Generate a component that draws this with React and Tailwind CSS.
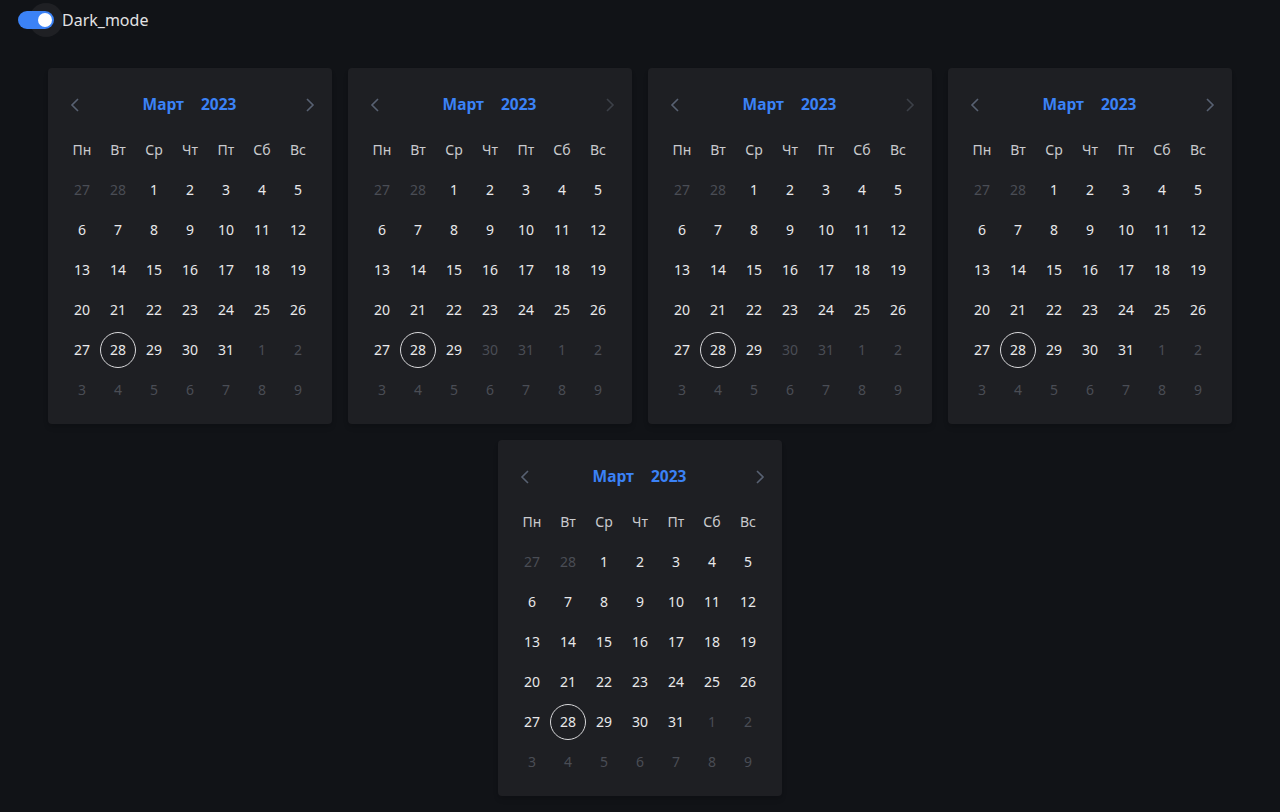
import React from "react";

const weekDays = ["Пн", "Вт", "Ср", "Чт", "Пт", "Сб", "Вс"];

// build March 2023 grid; maxDay = last selectable day of the month
function buildDays(maxDay) {
  const days = [];
  days.push({ n: 27, off: true }, { n: 28, off: true });
  for (let i = 1; i <= 31; i++) days.push({ n: i, off: i > maxDay, today: i === 28 });
  for (let i = 1; i <= 9; i++) days.push({ n: i, off: true });
  return days;
}

function Chevron({ dir, dim }) {
  return (
    <svg
      width="10"
      height="14"
      viewBox="0 0 10 14"
      fill="none"
      stroke={dim ? "#3c4048" : "#586172"}
      strokeWidth="1.6"
    >
      {dir === "left" ? <path d="M8 1 L2 7 L8 13" /> : <path d="M2 1 L8 7 L2 13" />}
    </svg>
  );
}

function Calendar({ maxDay = 31, nextDim = false }) {
  const days = buildDays(maxDay);
  return (
    <div className="w-[284px] rounded bg-[#1e1f23] px-4 pt-4 pb-[14px] shadow-md">
      <div className="mt-[1px] flex h-10 items-center justify-between pl-[6px] pr-[1px]">
        <Chevron dir="left" />
        <div className="mr-[6px] flex gap-[17px] text-[15.5px] font-bold text-[#3b82f6]">
          <span>Март</span>
          <span>2023</span>
        </div>
        <Chevron dir="right" dim={nextDim} />
      </div>
      <div className="mt-[5px] grid grid-cols-7">
        {weekDays.map((d) => (
          <div key={d} className="flex h-10 items-center justify-center text-sm text-[#c9cacd]">
            {d}
          </div>
        ))}
        {days.map((d, i) => (
          <div key={i} className="flex h-10 items-center justify-center">
            <span
              className={
                "flex h-9 w-9 items-center justify-center rounded-full text-sm " +
                (d.off ? "text-[#4a4d55] " : "text-[#e8e8ea] ") +
                (d.today ? "border border-[#d8d8da]" : "")
              }
            >
              {d.n}
            </span>
          </div>
        ))}
      </div>
    </div>
  );
}

export default function App() {
  return (
    <div
      className="min-h-[812px] bg-[#111317]"
      style={{ fontFamily: '"Noto Sans", "Open Sans", sans-serif' }}
    >
      <div className="flex h-10 items-center pl-[18px]">
        <div className="relative h-[18px] w-9">
          <div className="absolute left-[11px] top-[-8px] h-[34px] w-[34px] rounded-full bg-[#1f2024]" />
          <div className="absolute inset-0 rounded-full bg-[#3b82f6]" />
          <div className="absolute right-[2px] top-[2px] h-[14px] w-[14px] rounded-full bg-white" />
        </div>
        <span className="ml-[8px] text-base text-[#e2e2e4]">Dark_mode</span>
      </div>
      <div className="flex flex-wrap justify-center gap-4 pt-7">
        <Calendar />
        <Calendar maxDay={29} nextDim />
        <Calendar maxDay={29} nextDim />
        <Calendar />
        <Calendar />
      </div>
    </div>
  );
}
